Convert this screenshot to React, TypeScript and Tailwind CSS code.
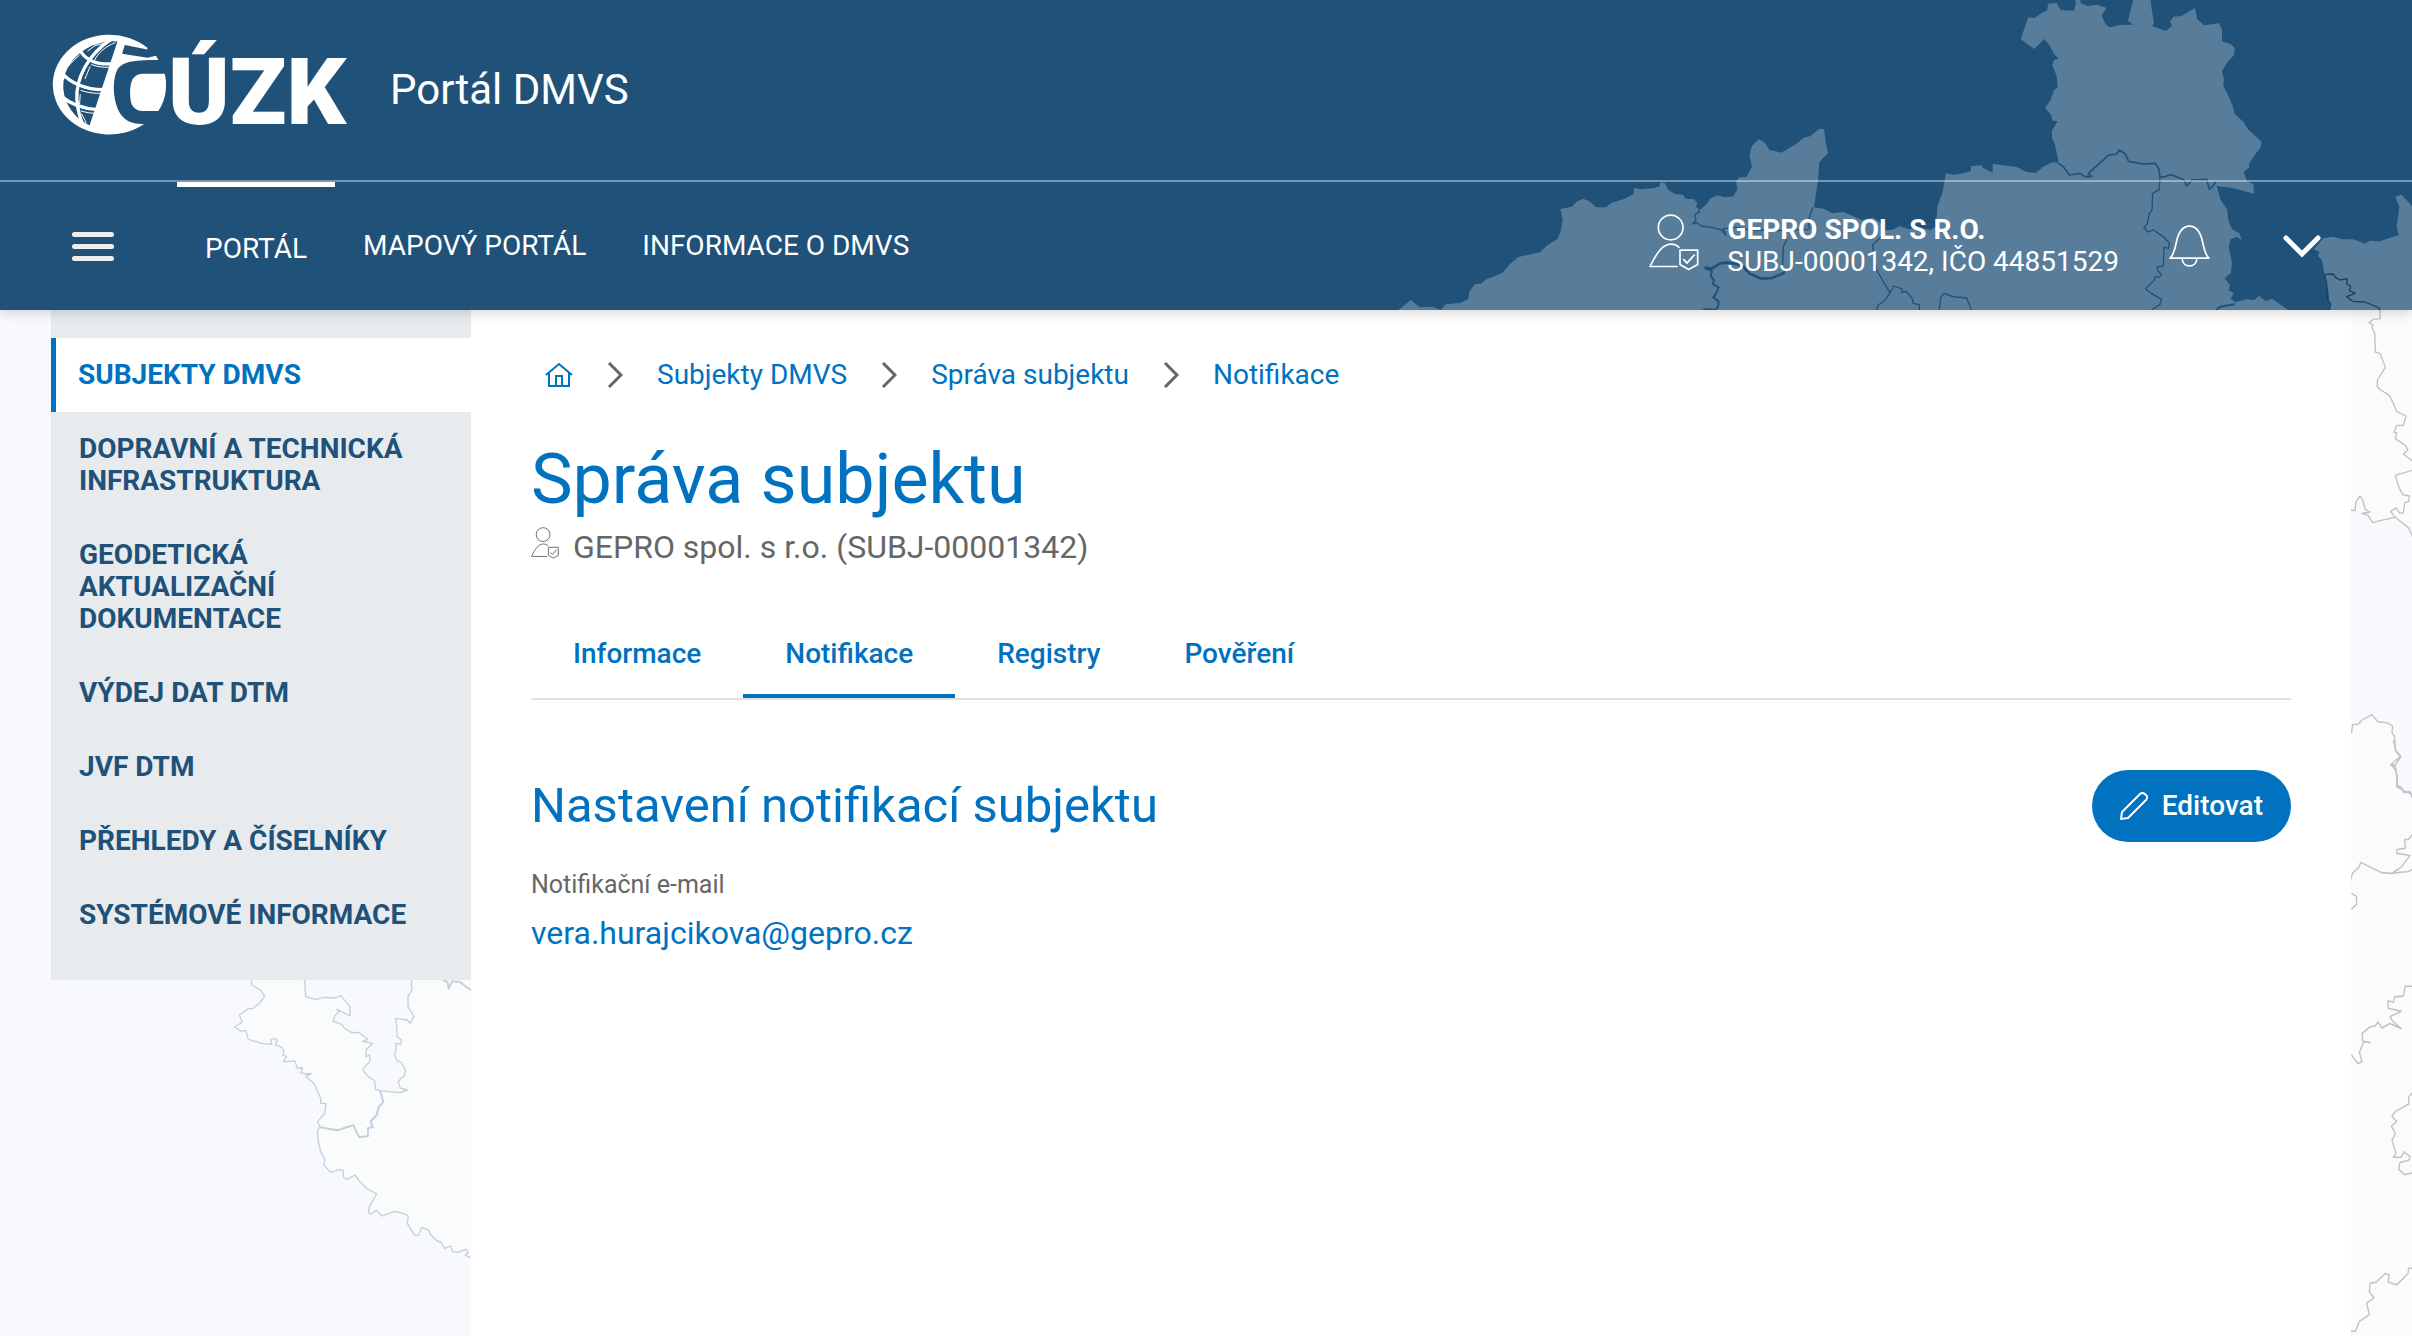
import React from "react";

const menuItems = [
  "Subjekty DMVS",
  "Dopravní a technická infrastruktura",
  "Geodetická aktualizační dokumentace",
  "Výdej dat DTM",
  "JVF DTM",
  "Přehledy a číselníky",
  "Systémové informace",
];

const topNav = ["Portál", "Mapový portál", "Informace o DMVS"];
const breadcrumbs = ["Subjekty DMVS", "Správa subjektu", "Notifikace"];
const tabs = ["Informace", "Notifikace", "Registry", "Pověření"];

const Globe = () => (
  <svg viewBox="0 27 370 306" className="h-[102px] w-[123px]" fill="none" aria-hidden="true">
    <path
      d="M308 68A170 150 0 1 0 298 297C262 298 236 288 220 255C203 215 203 165 217 135C232 112 255 105 341 105L334 92L308 98L232 86L240 60L308 73Z"
      fill="#fff"
    />
    <path d="M218 49A153 135 0 0 0 134 302Z" fill="#205179" />
    <g stroke="#fff" strokeWidth="10">
      <path d="M196 45C130 88 92 160 96 225C99 260 104 280 116 303" />
      <path d="M104 72C118 104 155 120 204 116" />
      <path d="M48 140C75 175 125 196 182 194" />
      <path d="M46 212C80 240 115 252 158 254" />
    </g>
    <g stroke="#fff" strokeWidth="3">
      <path d="M212 52C180 65 158 85 149 106M128 78L150 62L182 53M66 128L84 108L104 90" />
      <path d="M139 118C158 126 178 128 198 126M136 124L120 162M60 158C50 168 46 180 46 198" />
      <path d="M107 196C128 203 150 206 170 205M106 208L104 238M56 226C54 240 66 262 84 278M108 258C125 263 138 265 152 265M110 266L124 294" />
    </g>
    <path d="M292 146H360C368 175 366 222 341 258H292C262 255 256 235 256 203C256 170 264 148 292 146Z" fill="#fff" />
  </svg>
);

const UserShieldIcon = ({ className }: { className?: string }) => (
  <svg viewBox="0 0 150 170" fill="none" stroke="currentColor" strokeWidth="5" strokeLinejoin="round" className={className} aria-hidden="true">
    <circle cx="65" cy="40" r="37" />
    <path d="M86 157H3C22 118 40 90 66 90C77 90 85 94 91 101" />
    <path d="M93 108H146V151L119 166L93 151Z" />
    <path d="M103 135L114 147L137 121" />
  </svg>
);

const HeaderMap = () => (
  <svg viewBox="1380 0 1032 310" className="pointer-events-none absolute top-0 right-0 h-[310px] w-[1032px]" fill="none" aria-hidden="true">
    {/* northern and central regions */}
    <g transform="translate(1460 120) scale(.33333)">
      <path
        fill="#587d9a"
        d="M-185 570L-147 540L-121 562L-82 560L-58 570L-42 553L0 549L25 538L28 515L45 493L62 491L80 477L100 470L128 458L150 432L175 411L215 402L240 397L262 376L293 356L303 330L308 300L301 267L335 260L352 244L370 236L388 244L408 262L437 262L455 248L490 238L521 222L522 203L540 208L580 205L598 199L602 186L615 190L625 210L645 222L668 224L678 236L702 238L712 250L708 262L722 268L742 250L750 236L772 226L795 232L820 229L832 208L828 185L838 172L860 170L876 140L868 105L876 78L896 57L916 70L928 90L965 98L988 84L1012 70L1030 54L1052 48L1078 26L1092 28L1098 72L1104 99L1078 126L1074 180L1062 262L1090 266L1118 280L1150 276L1178 288L1205 300L1240 293L1264 310L1270 330L1295 330L1320 318L1345 328L1380 322L1410 330L1428 320L1432 260L1448 215L1458 160L1480 164L1508 160L1532 154L1534 138L1566 136L1570 570Z"
      />
      <g stroke="#205179" strokeWidth="4" strokeLinejoin="round">
        <path d="M716 258L718 275L704 285L708 300L698 312L712 308L724 318L755 322L785 330L798 346L790 326L830 322L870 330L960 332L1045 328M1058 262L1046 300L1048 328" />
        <path d="M970 332L980 360L970 380L968 435L974 458" />
        <path d="M734 443L755 446L780 430L802 428L830 432L850 440L868 460L885 468L905 476L935 474L974 458" strokeWidth="8" />
        <path d="M734 443L756 454L752 468L762 480L758 492L776 502L770 518L760 532L776 544L774 560L766 570M730 568L770 569" strokeWidth="6" />
        <path d="M1264 350L1238 374L1242 410L1250 450L1270 485L1290 518L1276 540L1254 556L1250 570M1290 518L1302 498L1328 508L1324 518L1338 514L1356 534L1360 550L1378 554V570" />
        <path d="M1438 570L1442 532L1454 520L1478 530L1520 534L1534 570" />
      </g>
    </g>
    <g transform="translate(1980) scale(.33333)">
      <path
        fill="#587d9a"
        d="M0 498L38 519V491L62 495L110 501L140 516L168 519L190 500L212 488L236 486L224 430L216 415V392L233 363L217 362L214 346L195 324L212 300L222 270L233 262L230 228L217 195L222 180L236 176L222 162L208 135L193 117L163 147L122 118L145 52L165 54L180 42L202 30L204 11L230 9L242 30L282 32L288 8L284 -2H300L303 10L322 18L352 14L380 24L365 45L375 70L388 82L425 74L460 74L444 62L456 15L460 -2H512L514 20L522 70L516 78L558 93L576 78L570 65L580 50L604 48L645 24L652 58L672 76L718 70L726 90V124L752 132L764 144L762 165L740 190L726 214L732 238L730 258L744 285L758 318L764 342L790 365L804 388L845 426L842 442L828 460L806 492L808 502L791 515L800 542L820 552L822 581L760 565L710 558L722 600L742 630L745 662L756 688L778 700L786 720L770 711L752 718L746 740L756 790L752 820L734 835L750 855L746 870L762 880L752 895L765 907L800 898L822 900L838 888L858 904L876 896L925 930H0Z"
      />
      <path
        fill="#587d9a"
        d="M1050 930L1046 880L1034 825L1026 780L1014 768L1018 755L1002 748L1030 715L1060 710L1085 718L1120 718L1155 731L1170 722L1198 724L1240 710L1256 705L1250 680L1258 620L1246 590L1265 584L1300 622V930Z"
      />
      <g stroke="#205179" strokeWidth="4" strokeLinejoin="round">
        <path d="M232 488L250 500L268 525L300 520L315 530H335L325 520L385 466L410 462L418 450L436 462L446 484L490 492L525 490L536 505L540 530L550 532L570 524L590 530L612 540L620 558L636 540L680 538L688 568L700 556L708 545" strokeWidth="5" />
        <path d="M540 530L538 568L518 580L516 630L508 640L502 670L492 684L504 696L520 690L550 710L568 728L566 745L552 742L550 798L532 800L534 814L544 822L538 832L526 830L522 842L496 866L514 880L545 898L540 914L514 930" />
        <path d="M708 930L722 920L765 912" strokeWidth="6" />
        <path d="M1034 823L1040 850L1042 900L1052 912L1048 930M1034 823L1060 822L1066 832L1080 840L1102 836L1100 852L1112 858L1108 872L1126 880L1100 890L1118 904L1155 906L1198 924V934" stroke="#1a3f5e" />
      </g>
    </g>
  </svg>
);

const LeftMap = () => (
  <svg viewBox="200 970 271 366" className="pointer-events-none absolute top-[970px] left-[200px] h-[366px] w-[271px]" fill="#fafcfc" stroke="#c3d0dd" strokeWidth="4" strokeLinejoin="round" aria-hidden="true">
    <g transform="translate(200 960) scale(.33333)">
      <path d="M152 50L156 75L183 92L194 110L180 128L158 146L145 146L118 165L127 186L104 201L122 213L138 212L145 238L185 250L215 253L212 240L225 235L232 240L226 254L246 262L252 275L248 285L260 290L250 305L285 303L292 325L308 324L302 338L316 342L334 340L318 350L342 370L362 415V430L378 430L374 460L353 485L360 500L352 513L354 540L362 575L374 598L372 615L392 637L418 629L430 632L430 650L440 658L465 645L480 665L500 685L530 702L508 740L506 758L512 762L530 751L546 768L585 754L610 760L625 768L622 790L644 826L655 826L665 803L686 810L692 824L712 843L722 846L734 865L752 858L758 875L772 877L798 868L804 878L796 886L830 900V50H640L634 70L636 90L624 110V140L642 170L630 190L622 180L587 175L590 198L592 230L604 240L602 252L588 250V270L583 285L592 303L603 306L617 330L612 348L600 358L595 368L601 384L622 390L600 398L540 392L526 388L524 362L502 348L488 328L510 303L508 285L498 290V270L518 250L488 244L502 238L476 217L455 218L432 204L426 194L400 184L404 168L418 154L410 148L450 167V140L422 107L405 114L375 112L345 118L317 110L313 50Z" />
      <path fill="none" strokeWidth="6" d="M540 392L550 425L536 442L530 465L512 485L518 502L504 504V528L478 532L460 496L440 502L412 511L360 502M728 60L742 66L746 86L756 64L780 66L800 82L816 92" />
    </g>
  </svg>
);

const RightMap = () => (
  <svg viewBox="2351 310 61 1026" className="pointer-events-none absolute top-[310px] right-0 h-[1026px] w-[61px] bg-[#fafcfc]" fill="none" stroke="#bfc1c3" strokeWidth="4" strokeLinejoin="round" aria-hidden="true">
    <g transform="translate(2280 300) scale(.33333)">
      <path
        fill="#f8f9fc"
        stroke="none"
        d="M200 628L225 632L228 605L240 588L248 600L256 628L270 636L268 655L278 668L300 662L345 650L385 684L400 710V1500L360 1475L350 1460L352 1435L346 1395L362 1368L346 1350L344 1310L336 1298L338 1278L320 1268L294 1266L276 1244L246 1260L236 1272L218 1274L214 1300H200Z"
      />
      <path d="M300 22V56L280 58L267 68L280 75L275 80L284 100L286 156L300 160L316 202L292 240V260L302 270L328 286L340 310L350 335L378 348L370 376L350 376L342 398H350L346 416L376 436L384 450L370 462L400 485" />
      <path d="M400 510L346 526L356 560L368 584L388 588L386 604L374 608L370 638L360 640L348 624L332 634L344 650L386 684L400 715M200 628L225 632L228 605L240 588L248 600L256 628L270 636L246 640L264 646L278 668L300 662L344 652" />
      <path d="M214 1300L218 1274L236 1272L246 1260L276 1244L294 1266L320 1268L338 1278L336 1298L344 1310L346 1350L362 1368L332 1395L346 1398L352 1435L350 1460L376 1475L392 1480L400 1500" />
    </g>
    <g transform="translate(2050 740) scale(.33333 .38)">
      <path d="M1030 0L1038 30L1052 44L1036 66H1024L1038 80L1042 120L1054 124L1062 138L1080 136L1090 158M1090 245L1075 262H1064L1066 285L1042 288L1040 298L1080 304L1052 336L1030 348M900 375L908 350L926 336L932 322L995 349L1020 351L1076 346L1090 338M904 403L920 412V432L904 446" />
      <path d="M1090 648H1066L1060 674L1034 676L1030 690L1014 686V706L1054 714L1020 728L1028 740L1054 760L1020 746L996 758L984 742L976 752L958 756L936 772L938 792L960 796L942 794L928 822L936 846L924 852L904 828" />
      <path d="M1090 925L1076 940V958L1056 968L1036 978L1026 990L1040 1004L1024 1016L1036 1036L1026 1054L1038 1088L1030 1098H1054L1062 1084L1080 1096L1076 1106L1050 1112L1046 1130L1064 1144L1090 1138" />
      <path d="M1090 1390H1076L1074 1404L1056 1420L1040 1434L1014 1426L1018 1408L1006 1404L980 1426L960 1430L958 1452L972 1468L950 1482L958 1512L928 1530L916 1556H900" />
    </g>
  </svg>
);

const Chevron = () => (
  <svg viewBox="0 0 16 26" className="h-[26px] w-4 text-[#666]" fill="none" stroke="currentColor" strokeWidth="3" aria-hidden="true">
    <path d="M2 1L14 13L2 25" />
  </svg>
);

const Header = () => (
  <header className="relative z-10 bg-[#205179] text-white shadow-[0_2px_12px_rgba(0,0,0,0.18)]">
    <HeaderMap />
    <div className="relative flex h-[182px] items-center border-b-2 border-white/40 pr-[60px] pl-[45px]">
      <a href="#" aria-label="ČÚZK" className="flex items-center pb-[10px]">
        <Globe />
        <span className="pt-4 text-[93px] leading-[100px] font-black">ÚZK</span>
      </a>
      <span className="ml-11 text-[42px] leading-[48px]">Portál DMVS</span>
    </div>
    <div className="relative flex h-32 items-stretch pr-[90px] pl-[72px]">
      <button type="button" aria-label="Menu" className="mr-[63px] flex w-[42px] flex-col justify-center gap-[7px]">
        <span className="h-[5px] rounded bg-[#eee]" />
        <span className="h-[5px] rounded bg-[#eee]" />
        <span className="h-[5px] rounded bg-[#eee]" />
      </button>
      <nav className="flex items-stretch text-[28px] leading-8 uppercase">
        {topNav.map((item, i) => (
          <a key={item} href="#" className={`flex items-center px-7 ${i === 0 ? "border-t-[5px] border-white" : ""}`}>
            {item}
          </a>
        ))}
      </nav>
      <div className="ml-auto flex items-center">
        <UserShieldIcon className="mr-7 mb-2 h-[57px] w-[50px]" />
        <div className="text-[28px] leading-8 uppercase">
          <div className="font-bold">GEPRO spol. s r.o.</div>
          <div>SUBJ-00001342, IČO 44851529</div>
        </div>
        <button type="button" aria-label="Upozornění" className="ml-[50px]">
          <svg viewBox="0 0 122 124" className="h-[42px] w-[41px]" fill="none" stroke="currentColor" strokeWidth="5" strokeLinejoin="round">
            <path d="M3 98C14 90 18 70 22 50C30 14 44 3 61 3C78 3 92 14 100 50C104 70 108 90 119 98Z" />
            <path d="M39 100C40 114 50 121 61 121C72 121 82 114 83 100" />
          </svg>
        </button>
        <button type="button" aria-label="Rozbalit" className="ml-[72px]">
          <svg viewBox="0 0 40 24" className="h-6 w-10" fill="none" stroke="currentColor" strokeWidth="5" strokeLinecap="round">
            <path d="M4 4L20 20L36 4" />
          </svg>
        </button>
      </div>
    </div>
  </header>
);

const Sidebar = () => (
  <aside className="w-[420px] shrink-0 self-start bg-[#e8ebee] pt-7 pb-7">
    <nav>
      <ul>
        {menuItems.map((item, i) => (
          <li key={item}>
            <a
              href="#"
              className={`block py-[21px] pr-14 text-[28px] leading-8 font-bold uppercase ${
                i === 0 ? "border-l-[5px] border-[#0072c0] bg-white pl-[22px] text-[#0072c0]" : "pl-7 text-[#205179]"
              }`}
            >
              {item}
            </a>
          </li>
        ))}
      </ul>
    </nav>
  </aside>
);

const App = () => {
  return (
    <div className="relative flex min-h-screen flex-col overflow-hidden bg-[#f8f9fc] font-['Roboto',sans-serif] text-[#666]">
      <LeftMap />
      <RightMap />
      <Header />
      <div className="relative flex flex-1 pr-[61px] pl-[51px]">
        <Sidebar />
        <main className="min-w-0 flex-1 bg-white px-[60px] pt-[49px]">
          <nav aria-label="Drobečková navigace" className="flex items-center gap-[34px] pl-[14px] text-[28px] leading-8 text-[#0072c0]">
            <a href="#" aria-label="Domů">
              <svg viewBox="0 0 28 26" className="h-[26px] w-7" fill="none" stroke="currentColor" strokeWidth="2">
                <path d="M1 13L14 2L27 13M4 11V24H24V11M11 24V14H17V24" />
              </svg>
            </a>
            {breadcrumbs.map((item) => (
              <React.Fragment key={item}>
                <Chevron />
                <a href="#">{item}</a>
              </React.Fragment>
            ))}
          </nav>

          <h1 className="mt-[52px] text-[70px] leading-[72px] text-[#0072c0]">Správa subjektu</h1>
          <div className="mt-3 flex items-start gap-[14px] text-[32px] leading-10">
            <UserShieldIcon className="h-8 w-7" />
            GEPRO spol. s r.o. (SUBJ-00001342)
          </div>

          <div role="tablist" className="mt-[43px] flex border-b-2 border-[#e0e0e0]">
            {tabs.map((tab) => (
              <button
                key={tab}
                type="button"
                role="tab"
                aria-selected={tab === "Notifikace"}
                className={`h-[88px] border-y-4 border-t-transparent px-[42px] text-[28px] leading-8 font-medium text-[#0072c0] ${
                  tab === "Notifikace" ? "border-b-[#0072c0]" : "border-b-transparent"
                }`}
              >
                {tab}
              </button>
            ))}
          </div>

          <section className="mt-[70px]">
            <div className="flex items-center justify-between">
              <h2 className="text-[49px] leading-[56px] text-[#0072c0]">Nastavení notifikací subjektu</h2>
              <button type="button" className="flex h-[72px] items-center gap-[14px] rounded-full bg-[#0072c0] px-7 text-[28px] font-medium text-white">
                <svg viewBox="0 0 28 28" className="size-7" fill="none" stroke="currentColor" strokeWidth="2" strokeLinejoin="round" aria-hidden="true">
                  <path d="M1 27L2 20L20 2C22 0 24 1 26 3C28 5 27 7 26 8L8 26Z" />
                </svg>
                Editovat
              </button>
            </div>
            <dl>
              <dt className="mt-[27px] text-[25px] leading-8">Notifikační e-mail</dt>
              <dd className="mt-3 text-[32px] leading-10 text-[#0072c0]">
                <a href="mailto:vera.hurajcikova@gepro.cz">vera.hurajcikova@gepro.cz</a>
              </dd>
            </dl>
          </section>
        </main>
      </div>
    </div>
  );
};

export default App;
